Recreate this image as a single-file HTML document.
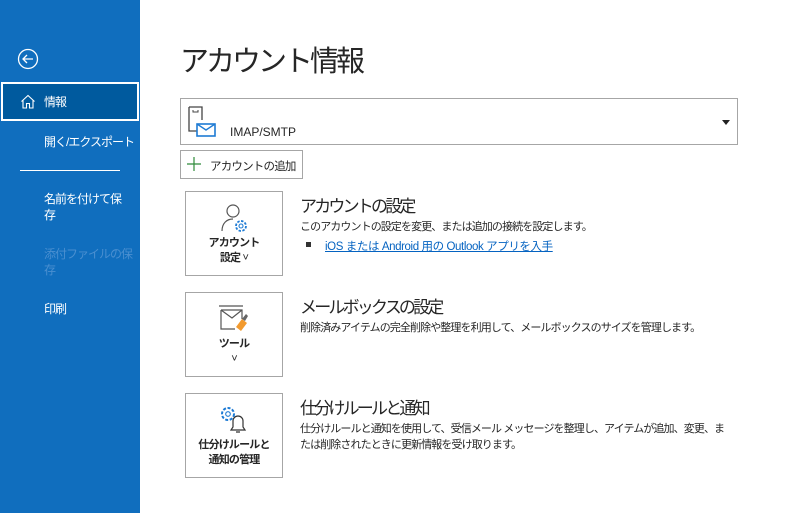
<!DOCTYPE html>
<html><head><meta charset="utf-8"><style>
*{margin:0;padding:0;box-sizing:border-box}
body{width:808px;height:513px;overflow:hidden;background:#fff;font-family:"Liberation Sans","Noto Sans CJK JP",sans-serif;color:#262626;position:relative}
.side{position:absolute;left:0;top:0;width:140px;height:513px;background:#106ebe;color:#fff}
.abs{position:absolute}
.sel{left:1px;top:82px;width:138px;height:39px;background:#005a9e;border:2px solid #fff}
.si{font-size:12px;left:44px;line-height:16px;letter-spacing:-1px;white-space:nowrap}
.box{position:absolute;border:1px solid #a6a6a6;background:#fff}
.btn{position:absolute;left:185px;width:98px;border:1px solid #a6a6a6;text-align:center;font-size:11px;font-weight:bold;color:#262626;line-height:15px;letter-spacing:-0.8px}
h2{position:absolute;font-weight:normal;font-size:17px;letter-spacing:-2.8px;left:300px;color:#262626;white-space:nowrap}
.d{position:absolute;left:300px;font-size:11px;letter-spacing:-0.9px;line-height:16px;color:#262626}
</style></head><body>
<div class="side">
 <svg class="abs" style="left:17px;top:48px" width="22" height="22" viewBox="0 0 22 22"><circle cx="11" cy="11" r="9.5" fill="none" stroke="#fff" stroke-width="1.3"/><path d="M6 11h10M10 7l-4 4 4 4" fill="none" stroke="#fff" stroke-width="1.3"/></svg>
 <div class="abs sel"></div>
 <svg class="abs" style="left:20px;top:94px" width="16" height="15" viewBox="0 0 16 15"><path d="M1.5 7.5L8 1.5l6.5 6M3 6.5V14h3.5V9.5h3V14H13V6.5" fill="none" stroke="#fff" stroke-width="1.1"/></svg>
 <div class="abs si" style="top:94px">情報</div>
 <div class="abs si" style="top:134px">開く/エクスポート</div>
 <div class="abs" style="left:20px;top:170px;width:100px;height:1px;background:#fff"></div>
 <div class="abs si" style="top:191px">名前を付けて保<br>存</div>
 <div class="abs si" style="top:246px;color:#4a8fd0">添付ファイルの保<br>存</div>
 <div class="abs si" style="top:301px">印刷</div>
</div>
<div class="abs" style="left:180px;top:38px;font-size:29px;letter-spacing:-3px;color:#262626;white-space:nowrap">アカウント情報</div>
<div class="box" style="left:180px;top:98px;width:558px;height:47px"></div>
<svg class="abs" style="left:188px;top:106px" width="30" height="32" viewBox="0 0 30 32"><path d="M1 1h13v13M1 1v24h9" fill="none" stroke="#444" stroke-width="1.3"/><path d="M5 4v2h5V4" fill="none" stroke="#444" stroke-width="1"/><rect x="9" y="18" width="18" height="12" fill="#fff" stroke="#1e7bd4" stroke-width="1.6"/><path d="M9 18l9 6 9-6" fill="none" stroke="#1e7bd4" stroke-width="1.4"/></svg>
<div class="abs" style="left:230px;top:125px;font-size:12px;color:#262626">IMAP/SMTP</div>
<div class="abs" style="left:722px;top:120px;width:0;height:0;border-left:4px solid transparent;border-right:4px solid transparent;border-top:5px solid #222"></div>
<div class="box" style="left:180px;top:150px;width:123px;height:29px"></div>
<svg class="abs" style="left:187px;top:157px" width="14" height="14"><path d="M7 0v14M0 7h14" stroke="#2e8b3a" stroke-width="1.2"/></svg>
<div class="abs" style="left:210px;top:158px;font-size:11.5px;letter-spacing:-0.8px">アカウントの追加</div>

<div class="btn" style="top:191px;height:85px;padding-top:44px">アカウント<br>設定 <span style="font-weight:normal">˅</span></div>
<svg class="abs" style="left:219px;top:202px" width="32" height="32" viewBox="0 0 32 32"><circle cx="14" cy="9" r="6" fill="none" stroke="#555" stroke-width="1.2"/><path d="M3 29c0-8 5-12 11-12" fill="none" stroke="#555" stroke-width="1.2"/><circle cx="22" cy="24" r="5" fill="#fff" stroke="#1e7bd4" stroke-width="1.8" stroke-dasharray="2.5 1.4"/><circle cx="22" cy="24" r="2" fill="none" stroke="#1e7bd4" stroke-width="1.1"/></svg>
<h2 style="top:192px">アカウントの設定</h2>
<div class="d" style="top:219px">このアカウントの設定を変更、または追加の接続を設定します。</div>
<div class="abs" style="left:306px;top:242px;width:5px;height:5px;background:#333"></div>
<div class="abs" style="left:325px;top:238px;font-size:11.5px;letter-spacing:-0.4px;color:#0563c1;text-decoration:underline">iOS または Android 用の Outlook アプリを入手</div>

<div class="btn" style="top:292px;height:85px;padding-top:44px">ツール<br><span style="font-weight:normal">˅</span></div>
<svg class="abs" style="left:218px;top:305px" width="32" height="30" viewBox="0 0 32 30"><path d="M1 1h24M3 5h21v9M3 5v19h14" fill="none" stroke="#555" stroke-width="1.2"/><path d="M3 5l11 8 10-8" fill="none" stroke="#555" stroke-width="1.2"/><path d="M18 22l6-8 5 4-6 8z" fill="#f29a2e"/><path d="M24 14l4-5 2 2-3 5" fill="#666"/></svg>
<h2 style="top:293px">メールボックスの設定</h2>
<div class="d" style="top:320px">削除済みアイテムの完全削除や整理を利用して、メールボックスのサイズを管理します。</div>

<div class="btn" style="top:393px;height:85px;padding-top:44px">仕分けルールと<br>通知の管理</div>
<svg class="abs" style="left:217px;top:404px" width="32" height="32" viewBox="0 0 32 32"><circle cx="11" cy="10" r="6" fill="none" stroke="#1e7bd4" stroke-width="2" stroke-dasharray="3 1.6"/><circle cx="11" cy="10" r="2.3" fill="none" stroke="#1e7bd4" stroke-width="1.1"/><path d="M14 26h14l-2-3v-6a5 5 0 0 0-10 0v6z M19 28h4" fill="none" stroke="#333" stroke-width="1.2"/></svg>
<h2 style="top:394px">仕分けルールと通知</h2>
<div class="d" style="top:421px;width:440px">仕分けルールと通知を使用して、受信メール メッセージを整理し、アイテムが追加、変更、ま<br>たは削除されたときに更新情報を受け取ります。</div>
</body></html>
